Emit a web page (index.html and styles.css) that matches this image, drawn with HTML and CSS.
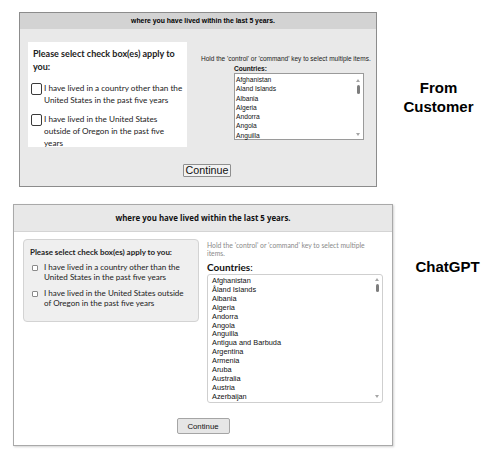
FILE: index.html
```html
<!DOCTYPE html>
<html lang="en">
<head>
<meta charset="utf-8">
<title>Residence history</title>
<link rel="stylesheet" href="styles.css">
</head>
<body>
<main class="page">

  <div class="row row-customer">
    <section class="old">
      <div class="old-head">where you have lived within the last 5 years.</div>
      <div class="old-body">
        <div class="old-checks">
          <p class="old-title">Please select check box(es) apply to you:</p>
          <label class="old-item"><span class="old-box"></span><span class="old-text">I have lived in a country other than the United States in the past five years</span></label>
          <label class="old-item"><span class="old-box"></span><span class="old-text">I have lived in the United States outside of Oregon in the past five years</span></label>
        </div>
        <div class="old-countries">
          <p class="old-hint">Hold the 'control' or 'command' key to select multiple items.</p>
          <div class="old-pick">
            <div class="old-label">Countries:</div>
            <div class="old-list">
              <ul class="old-options">
                <li>Afghanistan</li>
                <li>Aland Islands</li>
                <li>Albania</li>
                <li>Algeria</li>
                <li>Andorra</li>
                <li>Angola</li>
                <li>Anguilla</li>
              </ul>
              <div class="old-scroll">
                <span class="arrow-up"></span>
                <span class="old-thumb"></span>
                <span class="scroll-gap"></span>
                <span class="arrow-down"></span>
              </div>
            </div>
          </div>
        </div>
      </div>
      <div class="old-foot"><button class="old-btn" type="button">Continue</button></div>
    </section>
    <div class="tag tag-customer">From<br>Customer</div>
  </div>

  <div class="row row-gpt">
    <section class="new">
      <div class="new-head">where you have lived within the last 5 years.</div>
      <div class="new-body">
        <div class="new-checks">
          <p class="new-title">Please select check box(es) apply to you:</p>
          <label class="new-item"><span class="new-box"></span><span class="new-text">I have lived in a country other than the United States in the past five years</span></label>
          <label class="new-item"><span class="new-box"></span><span class="new-text">I have lived in the United States outside of Oregon in the past five years</span></label>
        </div>
        <div class="new-countries">
          <p class="new-hint">Hold the 'control' or 'command' key to select multiple items.</p>
          <div class="new-label"><b>Countries</b>:</div>
          <div class="new-list">
            <ul class="new-options">
              <li>Afghanistan</li>
              <li>Åland Islands</li>
              <li>Albania</li>
              <li>Algeria</li>
              <li>Andorra</li>
              <li>Angola</li>
              <li>Anguilla</li>
              <li>Antigua and Barbuda</li>
              <li>Argentina</li>
              <li>Armenia</li>
              <li>Aruba</li>
              <li>Australia</li>
              <li>Austria</li>
              <li>Azerbaijan</li>
            </ul>
            <div class="new-scroll">
              <span class="arrow-up"></span>
              <span class="new-thumb"></span>
              <span class="scroll-gap"></span>
              <span class="arrow-down"></span>
            </div>
          </div>
        </div>
      </div>
      <div class="new-foot"><button class="new-btn" type="button">Continue</button></div>
    </section>
    <div class="tag tag-gpt">ChatGPT</div>
  </div>

</main>
</body>
</html>
```
FILE: styles.css
```css
* { box-sizing: border-box; }

html, body {
  margin: 0;
  background: #ffffff;
}

body {
  width: 500px;
  height: 456px;
  overflow: hidden;
  font-family: "Liberation Sans", Arial, sans-serif;
  color: #111;
}

p { margin: 0; }
ul { margin: 0; padding: 0; list-style: none; }
label { display: flex; }

.page {
  display: flex;
  flex-direction: column;
  padding-top: 12px;
}

.row {
  display: flex;
  align-items: flex-start;
}

/* ---- right-hand captions ---- */
.tag {
  flex: 1;
  text-align: center;
  font-family: "Liberation Sans", Arial, sans-serif;
  font-weight: bold;
  font-size: 15px;
  line-height: 19px;
  color: #000;
}
.tag-customer { padding-top: 66px; }
.tag-gpt { padding-top: 53px; padding-left: 2px; }

/* ---- first form (legacy style) ---- */
.row-customer { padding-left: 19px; }

.old {
  flex: none;
  width: 358px;
  height: 175px;
  border: 1px solid #8c8c8c;
  background: #e9e9e9;
  display: flex;
  flex-direction: column;
}

.old-head {
  height: 16px;
  padding-left: 10px;
  background: #d3d3d3;
  font-weight: bold;
  font-size: 6.85px;
  line-height: 16px;
  text-align: center;
  color: #000;
}

.old-body {
  display: flex;
  padding: 13px 0 0 8px;
  height: 135px;
}

.old-checks {
  flex: none;
  width: 159px;
  height: 105px;
  background: #ffffff;
  padding: 5px 3px 0 3px;
  font-family: Lato, "Open Sans", sans-serif;
  color: #222;
}

.old-title {
  font-weight: bold;
  font-size: 9px;
  line-height: 13px;
  padding-left: 2px;
  margin-bottom: 9px;
}

.old-item {
  gap: 2px;
  font-size: 8.2px;
  line-height: 12px;
  margin-bottom: 7px;
}

.old-text { flex: 1; }

.old-box {
  flex: none;
  width: 11px;
  height: 12px;
  margin-top: 1px;
  border: 1.5px solid #3a3a3a;
  border-radius: 2px;
  background: #fff;
}

.old-countries {
  flex: none;
  padding: 13px 0 0 14px;
}

.old-hint {
  font-size: 6.5px;
  line-height: 8px;
  color: #222;
  white-space: nowrap;
}

.old-pick {
  margin: 2px 0 0 33px;
}

.old-label {
  font-weight: bold;
  font-size: 6.6px;
  line-height: 8px;
  color: #111;
}

.old-list {
  display: flex;
  width: 130px;
  height: 67px;
  border: 1px solid #9a9a9a;
  background: #fff;
}

.old-options {
  flex: 1;
  padding: 1px 0 0 1px;
  font-size: 6.7px;
  line-height: 9.3px;
  color: #111;
}

.old-scroll,
.new-scroll {
  flex: none;
  display: flex;
  flex-direction: column;
  align-items: center;
}

.old-scroll { width: 10px; padding: 5px 0 3px; }

.arrow-up,
.arrow-down {
  width: 0;
  height: 0;
  border-left: 2.5px solid transparent;
  border-right: 2.5px solid transparent;
}
.arrow-up { border-bottom: 3px solid #a5a5a5; }
.arrow-down { border-top: 3px solid #a5a5a5; }

.old-thumb {
  width: 3px;
  height: 9px;
  margin-top: 3px;
  border-radius: 1.5px;
  background: #7d7d7d;
}

.scroll-gap { flex: 1; }

.old-foot {
  display: flex;
  justify-content: center;
  padding-left: 18px;
}

.old-btn {
  height: 13px;
  padding: 0 2px;
  font-family: "Liberation Sans", Arial, sans-serif;
  font-size: 10.7px;
  line-height: 11px;
  color: #111;
  background: #f2f2f2;
  border: 1px solid #8f8f8f;
  border-radius: 1px;
}

/* ---- second form (card style) ---- */
.row-gpt {
  padding: 17px 0 0 13px;
}

.new {
  flex: none;
  width: 380px;
  height: 242px;
  border: 1px solid #a9a9a9;
  background: #fff;
  box-shadow: 1px 1px 2px rgba(0, 0, 0, 0.18);
  display: flex;
  flex-direction: column;
}

.new-head {
  height: 27px;
  background: #e8e8e8;
  border-bottom: 1px solid #d4d4d4;
  font-family: "Open Sans", "Noto Sans", sans-serif;
  font-weight: bold;
  font-size: 7.9px;
  line-height: 26px;
  text-align: center;
  color: #111;
}

.new-body {
  display: grid;
  grid-template-columns: 176px 176px;
  column-gap: 8px;
  padding: 7px 0 0 9px;
}

.new-checks {
  align-self: start;
  height: 83px;
  background: #efefef;
  border: 1px solid #d3d3d3;
  border-radius: 4px;
  padding: 7px 8px 0 6px;
  font-family: Lato, "Open Sans", sans-serif;
  color: #222;
}

.new-title {
  font-weight: bold;
  font-size: 7.95px;
  line-height: 11px;
  margin-bottom: 4px;
}

.new-item {
  gap: 6px;
  font-size: 8.05px;
  line-height: 10px;
  margin-bottom: 6px;
  padding-left: 2px;
}

.new-text { flex: 1; }

.new-box {
  flex: none;
  width: 6px;
  height: 6px;
  margin-top: 2.5px;
  border: 1px solid #8a8a8a;
  border-radius: 1px;
  background: #fff;
}

.new-countries {
  font-family: Lato, "Open Sans", sans-serif;
}

.new-hint {
  font-size: 6.8px;
  line-height: 8px;
  color: #8a8a8a;
  padding: 2px 4px 0 0;
}

.new-label {
  font-size: 10px;
  line-height: 10px;
  margin-top: 5px;
  color: #111;
}

.new-list {
  display: flex;
  height: 129px;
  margin-top: 2px;
  border: 1px solid #cfcfcf;
  border-radius: 3px;
  background: #fff;
}

.new-options {
  flex: 1;
  padding: 2px 0 0 4px;
  font-family: "Liberation Sans", Arial, sans-serif;
  font-size: 7.35px;
  line-height: 8.9px;
  color: #111;
}

.new-scroll { width: 10px; padding: 3px 0 4px; }

.new-thumb {
  width: 3px;
  height: 8px;
  margin-top: 3px;
  border-radius: 1.5px;
  background: #7d7d7d;
}

.new-foot {
  display: flex;
  justify-content: center;
  padding-top: 15px;
}

.new-btn {
  width: 53px;
  height: 16px;
  padding: 0;
  font-family: "Liberation Sans", Arial, sans-serif;
  font-size: 7.8px;
  color: #111;
  background: #e6e6e6;
  border: 1px solid #a5a5a5;
  border-radius: 2px;
}
```
